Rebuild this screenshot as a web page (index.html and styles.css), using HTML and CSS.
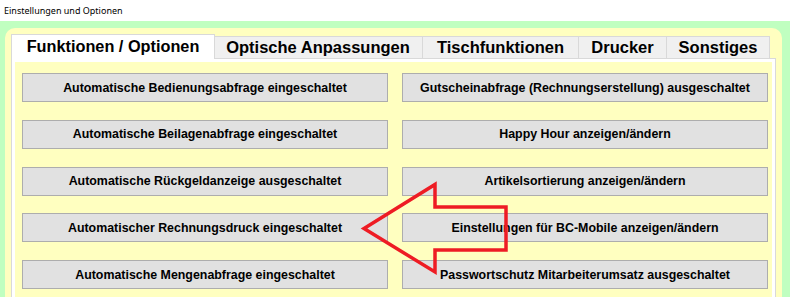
FILE: index.html
```html
<!DOCTYPE html>
<html lang="de">
<head>
    <meta charset="UTF-8" />
    <title>Einstellungen und Optionen</title>

    <link rel="stylesheet" href="styles.css">
</head>
<body>
<div class="fenster">
    <div class="titel">Einstellungen und Optionen</div>

    <div class="hintergrund">
        <div class="rahmen">
            <div class="reiter">
                <div class="tab aktiv">Funktionen / Optionen</div>
                <div class="tab optik">Optische Anpassungen</div>
                <div class="tab tisch">Tischfunktionen</div>
                <div class="tab drucker">Drucker</div>
                <div class="tab sonst">Sonstiges</div>
            </div>

            <div class="seite-rand">
                <div class="seite">
                    <div class="knoepfe">
                        <div class="knopf">Automatische Bedienungsabfrage eingeschaltet</div>
                        <div class="knopf">Gutscheinabfrage (Rechnungserstellung) ausgeschaltet</div>
                        <div class="knopf">Automatische Beilagenabfrage eingeschaltet</div>
                        <div class="knopf">Happy Hour anzeigen/ändern</div>
                        <div class="knopf">Automatische Rückgeldanzeige ausgeschaltet</div>
                        <div class="knopf">Artikelsortierung anzeigen/ändern</div>
                        <div class="knopf">Automatischer Rechnungsdruck eingeschaltet</div>
                        <div class="knopf">Einstellungen für BC-Mobile anzeigen/ändern</div>
                        <div class="knopf">Automatische Mengenabfrage eingeschaltet</div>
                        <div class="knopf">Passwortschutz Mitarbeiterumsatz ausgeschaltet</div>
                    </div>
                </div>
            </div>
        </div>
    </div>

    <!-- roter Hinweispfeil -->
    <svg class="pfeil" width="790" height="297" viewBox="0 0 790 297">
        <polygon points="364,228.5 435,184.5 435,207 506,207 506,250 435,250 435,272"
                 fill="none" stroke="#ee1c24" stroke-width="3.5" stroke-linejoin="miter" />
    </svg>
</div>
</body>
</html>
```

FILE: styles.css
```css
body {
    margin: 0;
    font-family: "Liberation Sans", Arial, sans-serif;
    overflow: hidden;
}

.fenster {
    position: relative;
    width: 790px;
    height: 297px;
    overflow: hidden;
    background-color: #c0ffc0;
}

.titel {
    height: 21px;
    background-color: #fff;
    font-family: "Noto Sans", sans-serif;
    font-size: 9px;
    line-height: 21px;
    padding-left: 4px;
    color: #000;
}

.hintergrund {
    padding: 7px 8px 0 5px;
}

.rahmen {
    background-color: #ffffc0;
    border-radius: 10px;
    padding: 6px 6px 0 6px;
    height: 300px;
}

.reiter {
    display: flex;
    align-items: flex-end;
    height: 24px;
    padding-left: 2px;
}

.tab {
    box-sizing: border-box;
    height: 22px;
    margin-left: -1px;
    border: 1px solid #d9d9d9;
    border-bottom: none;
    background-color: #f0f0f0;
    font-weight: bold;
    font-size: 16.5px;
    line-height: 21px;
    text-align: center;
    color: #000;
}

.tab.aktiv {
    position: relative;
    z-index: 1;
    width: 204px;
    height: 25px;
    margin-left: -2px;
    margin-right: -1px;
    margin-bottom: -1px;
    background-color: #fff;
    font-size: 16.3px;
    line-height: 23px;
}

.optik   { width: 210px; }
.tisch   { width: 157px; }
.drucker { width: 89px; }
.sonst   { width: 104px; }

.seite-rand {
    border: 1px solid #d9d9d9;
    background-color: #fff;
    padding: 3px;
}

.seite {
    background-color: #ffffc0;
    padding: 11px 0 30px 7px;
}

.knoepfe {
    display: grid;
    grid-template-columns: 366px 366px;
    column-gap: 14px;
    row-gap: 17.75px;
}

.knopf {
    box-sizing: border-box;
    height: 29px;
    display: flex;
    align-items: center;
    justify-content: center;
    background-color: #e1e1e1;
    border: 1px solid #adadad;
    font-weight: bold;
    font-size: 12.4px;
    color: #000;
}

.pfeil {
    position: absolute;
    left: 0;
    top: 0;
    pointer-events: none;
}
```
